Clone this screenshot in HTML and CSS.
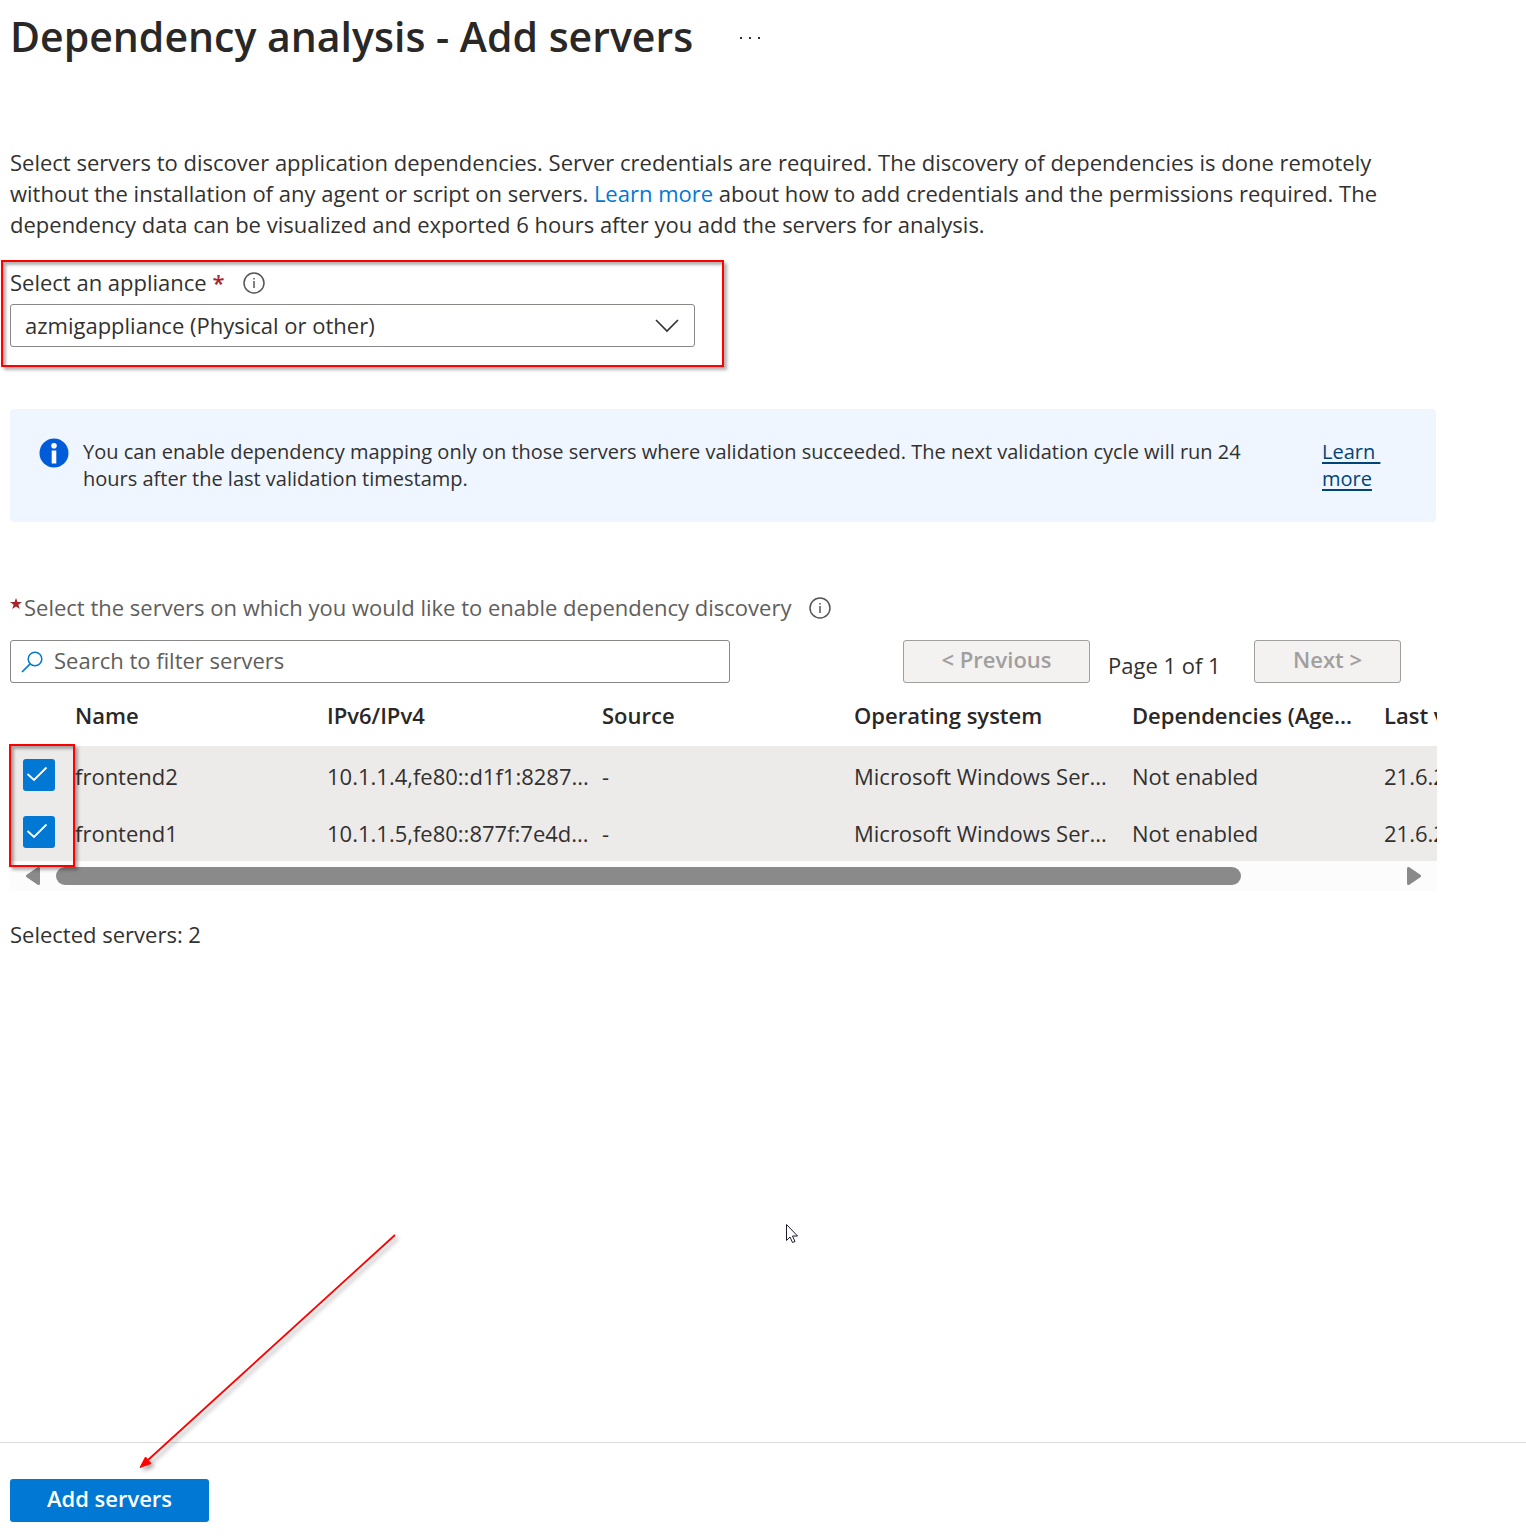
FILE: index.html
```html
<!DOCTYPE html>
<html lang="en">
<head>
<meta charset="utf-8">
<meta name="viewport" content="width=device-width, initial-scale=1">
<title>Dependency analysis - Add servers</title>
<link rel="stylesheet" href="styles.css">
</head>
<body>
<main class="blade">
  <header class="blade-header">
    <h1>Dependency analysis - Add servers</h1>
    <button class="more" type="button" aria-label="More actions">
      <svg width="22" height="4" viewBox="0 0 22 4"><path d="M1 1h2v2H1zM10 1h2v2h-2zM19 1h2v2h-2z" fill="#323130"/></svg>
    </button>
  </header>

  <p class="intro">Select servers to discover application dependencies. Server credentials are required. The discovery of dependencies is done remotely without the installation of any agent or script on servers. <a href="#">Learn more</a> about how to add credentials and the permissions required. The dependency data can be visualized and exported 6 hours after you add the servers for analysis.</p>

  <section class="appliance">
    <div class="label-row">
      <label for="appliance">Select an appliance <span class="required">*</span></label>
      <svg class="info" width="22" height="22" viewBox="0 0 22 22"><circle cx="11" cy="11" r="10" fill="none" stroke="#555" stroke-width="1.500"/><path d="M11 9v7M11 6v1.500" stroke="#555" stroke-width="1.500" fill="none"/></svg>
    </div>
    <div class="select-wrap">
      <select id="appliance"><option>azmigappliance (Physical or other)</option></select>
      <svg class="chevron" width="24" height="14" viewBox="0 0 24 14"><path d="M1 1l11 11L23 1" fill="none" stroke="#323130" stroke-width="1.600"/></svg>
    </div>
    <div class="callout callout-appliance"></div>
  </section>

  <div class="notice">
    <svg class="notice-icon" width="30" height="30" viewBox="0 0 30 30"><circle cx="15" cy="15" r="14.500" fill="#015cda"/><circle cx="15" cy="7.800" r="2.800" fill="#fff"/><path d="M12.700 12.500h4.600v13h-4.600z" fill="#fff"/></svg>
    <p>You can enable dependency mapping only on those servers where validation succeeded. The next validation cycle will run 24 hours after the last validation timestamp.</p>
    <a href="#">Learn&nbsp;<br>more</a>
  </div>

  <section class="servers">
    <div class="label-row muted">
      <label for="filter"><svg class="star" width="12" height="12" viewBox="0 0 12 12"><path d="M6 0l1.500 4h4.500L8.400 6.700 9.800 11 6 8.400 2.200 11 3.600 6.700 0 4h4.500z" fill="#a4262c"/></svg>Select the servers on which you would like to enable dependency discovery</label>
      <svg class="info" width="22" height="22" viewBox="0 0 22 22"><circle cx="11" cy="11" r="10" fill="none" stroke="#555" stroke-width="1.500"/><path d="M11 9v7M11 6v1.500" stroke="#555" stroke-width="1.500" fill="none"/></svg>
    </div>

    <div class="toolbar">
      <div class="search">
        <svg width="22" height="22" viewBox="0 0 22 22"><circle cx="14" cy="8" r="6.800" fill="none" stroke="#0078d4" stroke-width="1.500"/><path d="M9.200 12.800L1 21" stroke="#0078d4" stroke-width="1.700"/></svg>
        <input id="filter" type="text" placeholder="Search to filter servers">
      </div>
      <div class="pager">
        <button class="previous" type="button" disabled>&lt; Previous</button>
        <span>Page 1 of 1</span>
        <button class="next" type="button" disabled>Next &gt;</button>
      </div>
    </div>

    <div class="grid">
      <div class="grid-view">
        <table>
          <colgroup><col class="c-check"><col class="c-std"><col class="c-ip"><col class="c-std"><col class="c-os"><col class="c-std"><col class="c-std"></colgroup>
          <thead>
            <tr><th></th><th>Name</th><th>IPv6/IPv4</th><th>Source</th><th>Operating system</th><th>Dependencies (Age...</th><th>Last validated</th></tr>
          </thead>
          <tbody>
            <tr>
              <td><span class="check"><input type="checkbox" aria-label="frontend2" checked><svg width="32" height="32" viewBox="0 0 32 32"><path d="M4.500 15l6.500 6L23.500 8.500" fill="none" stroke="#fff" stroke-width="1.800"/></svg></span></td>
              <td>frontend2</td><td>10.1.1.4,fe80::d1f1:8287...</td><td>-</td><td>Microsoft Windows Ser...</td><td>Not enabled</td><td>21.6.2024</td>
            </tr>
            <tr>
              <td><span class="check"><input type="checkbox" aria-label="frontend1" checked><svg width="32" height="32" viewBox="0 0 32 32"><path d="M4.500 15l6.500 6L23.500 8.500" fill="none" stroke="#fff" stroke-width="1.800"/></svg></span></td>
              <td>frontend1</td><td>10.1.1.5,fe80::877f:7e4d...</td><td>-</td><td>Microsoft Windows Ser...</td><td>Not enabled</td><td>21.6.2024</td>
            </tr>
          </tbody>
        </table>
      </div>
      <div class="scrollbar">
        <svg width="14" height="18" viewBox="0 0 14 18"><path d="M12.500 1.500v15L1.500 9z" fill="#8a8a8a" stroke="#8a8a8a" stroke-width="3" stroke-linejoin="round"/></svg>
        <div class="track"><div class="thumb"></div></div>
        <svg width="14" height="18" viewBox="0 0 14 18"><path d="M1.500 1.500v15L12.500 9z" fill="#8a8a8a" stroke="#8a8a8a" stroke-width="3" stroke-linejoin="round"/></svg>
      </div>
      <div class="callout callout-checks"></div>
    </div>
    <p class="selected">Selected servers: 2</p>
  </section>
</main>

<footer class="footer">
  <button class="primary" type="button">Add servers</button>
  <svg class="arrow" width="270" height="246" viewBox="0 0 270 246"><path d="M259 6L12 231" stroke="#f00" stroke-width="1.800"/><path d="M4 238.500l5.500-10.500 5.500 6.500z" fill="#f00" stroke="#f00"/></svg>
</footer>
<svg class="cursor" width="14" height="22" viewBox="0 0 14 22"><path d="M1.500 1.500v16l3.500-3.500 2.500 5.500 2.500-1-2.500-5.500h5z" fill="#fff" stroke="#1b1b2b"/></svg>
</body>
</html>
```
FILE: styles.css
```css
* { box-sizing: border-box; }

body {
  margin: 0;
  min-height: 100vh;
  display: flex;
  flex-direction: column;
  position: relative;
  background: #fff;
  color: #323130;
  font: 22px/30px "Open Sans", "Noto Sans", sans-serif;
}

h1, p { margin: 0; }
svg { display: block; flex: none; }
button, input, select { font: inherit; color: inherit; }
a { color: #0078d4; text-decoration: none; }

.blade { flex: 1; padding: 8px 90px 0 10px; }

.blade-header { display: flex; align-items: center; gap: 38px; height: 60px; }
h1 { padding-bottom: 4px; font-size: 41px; line-height: 56px; font-weight: 600; color: #292827; }
.more { border: 0; background: none; padding: 8px; }

.intro { margin-top: 79px; line-height: 31px; max-width: 1384px; }

.appliance { position: relative; margin-top: 27px; max-width: 685px; }
.label-row { display: flex; align-items: center; gap: 18px; height: 32px; }
.label-row label { padding-bottom: 2px; }
.required { color: #a4262c; font-weight: 600; }
.select-wrap { display: grid; align-items: center; margin-top: 5px; }
.select-wrap > * { grid-area: 1 / 1; }
select {
  appearance: none;
  width: 100%;
  height: 43px;
  padding: 0 14px 2px;
  border: 1px solid #8a8886;
  border-radius: 3px;
  background: #fff;
}
.chevron { justify-self: end; margin-right: 16px; pointer-events: none; }

.callout {
  position: absolute;
  border: 2px solid #f00;
  pointer-events: none;
  box-shadow: 3px 3px 3px rgba(0, 0, 0, .3), inset 3px 3px 3px rgba(0, 0, 0, .3);
}
.callout-appliance { inset: -7px -29px -20px -9px; }
.callout-checks { left: -1px; top: 58px; width: 66px; height: 123px; }

.notice {
  display: flex;
  gap: 14px;
  margin-top: 62px;
  padding: 29px 48px 30px 29px;
  border-radius: 4px;
  background: #eff6ff;
  font-size: 20px;
  line-height: 27px;
}
.notice p { flex: 1; padding-right: 40px; }
.notice a { width: 66px; color: #004578; text-decoration: underline; text-decoration-thickness: 2px; text-underline-offset: 3px; }

.servers { margin-top: 70px; }
.muted { color: #605e5c; }
.star { display: inline-block; margin-right: 2px; vertical-align: 6px; }

.toolbar { display: flex; justify-content: space-between; margin-top: 16px; padding-right: 35px; }
.search {
  display: flex;
  align-items: center;
  gap: 11px;
  flex: 0 1 720px;
  height: 43px;
  padding: 0 10px;
  border: 1px solid #8a8886;
  border-radius: 3px;
}
.search input { flex: 1; min-width: 0; border: 0; padding: 0 0 3px; outline: 0; background: none; }
.search input::placeholder { color: #605e5c; opacity: 1; }
.pager { display: flex; gap: 18px; }
.pager span { width: 128px; padding-top: 10px; white-space: nowrap; }
.pager button {
  height: 43px;
  padding: 0 0 5px;
  border: 1px solid #a19f9d;
  border-radius: 3px;
  background: #f3f2f1;
  color: #a19f9d;
  font-weight: 600;
}
.previous { width: 187px; }
.next { width: 147px; }

.grid { position: relative; margin: 3px -1px 0 0; }
.grid-view { overflow: hidden; }
table { width: 1626px; table-layout: fixed; border-collapse: collapse; }
.c-check { width: 65px; }
.c-std { width: 252px; }
.c-ip { width: 275px; }
.c-os { width: 278px; }
th, td { padding: 0; text-align: left; white-space: nowrap; }
th { height: 60px; padding-bottom: 2px; font-weight: 600; color: #292827; }
td { height: 57px; padding-top: 2px; background: #edebe9; }
tbody tr:last-child td { height: 58px; }
.check { display: grid; width: 32px; margin: 0 0 2px 13px; }
.check > * { grid-area: 1 / 1; }
.check input { appearance: none; width: 32px; height: 32px; margin: 0; border-radius: 3px; background: #0078d4; }
.check svg { pointer-events: none; }

.scrollbar { display: flex; align-items: center; gap: 16px; height: 30px; padding: 0 16px; background: #fcfcfc; }
.track { flex: 1; padding-right: 150px; }
.thumb { height: 18px; border-radius: 9px; background: #8a8a8a; }
.selected { margin-top: 28px; }

.footer { position: relative; padding: 36px 10px 15px; border-top: 1px solid #dcdcdc; }
.primary {
  display: block;
  width: 199px;
  height: 43px;
  padding: 0 0 5px;
  border: 0;
  border-radius: 3px;
  background: #0078d4;
  color: #fff;
  font-weight: 600;
}
.arrow { position: absolute; left: 136px; bottom: 62px; filter: drop-shadow(3px 3px 2px rgba(0, 0, 0, .35)); pointer-events: none; }
.cursor { position: absolute; left: 785px; top: 1223px; }
```
